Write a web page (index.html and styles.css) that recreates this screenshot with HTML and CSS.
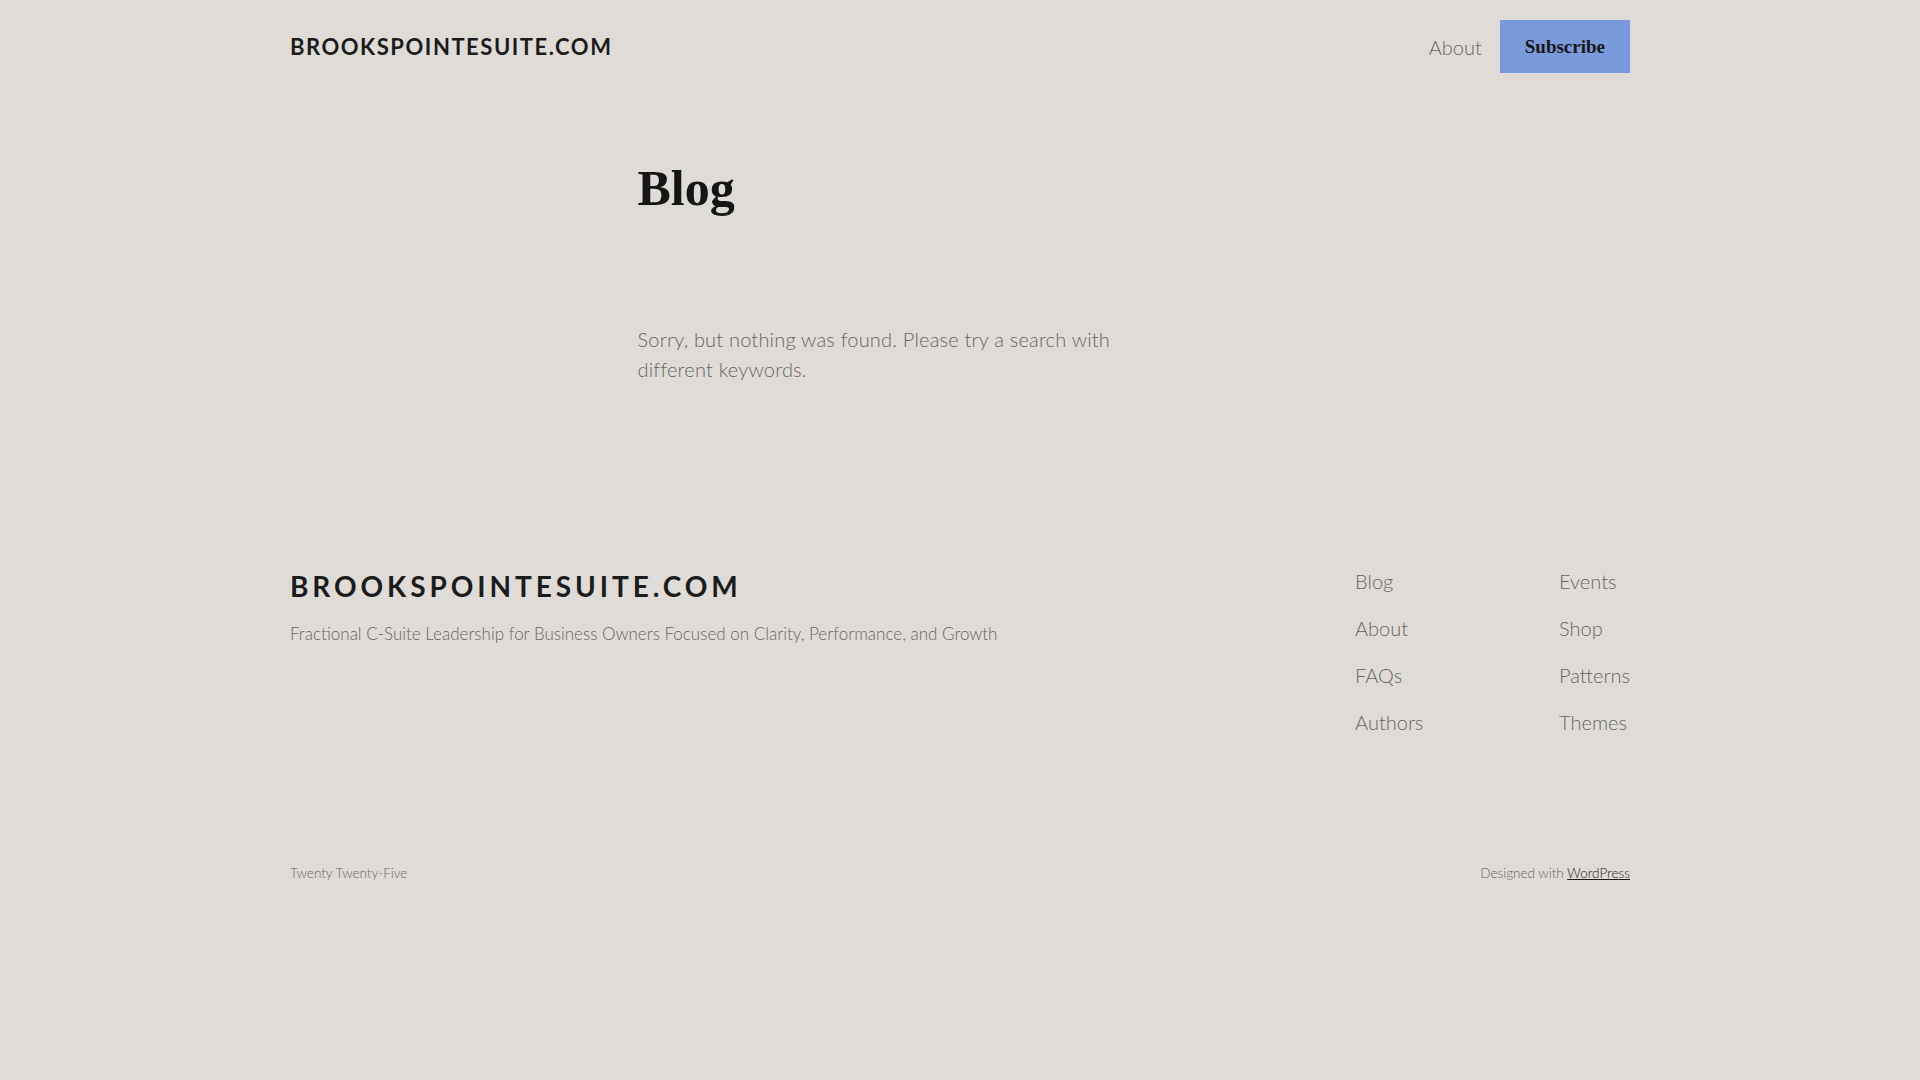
FILE: index.html
```html
<!DOCTYPE html>
<html lang="en">
<head>
    <meta charset="UTF-8">
    <meta name="viewport" content="width=device-width, initial-scale=1.0">
    <title>Blog – brookspointesuite.com</title>
    <link rel="stylesheet" href="styles.css">
</head>
<body>
    <header class="site-header">
        <a class="site-title" href="#">brookspointesuite.com</a>
        <nav class="header-nav">
            <a href="#">About</a>
            <a class="subscribe" href="#">Subscribe</a>
        </nav>
    </header>

    <main class="content">
        <h1>Blog</h1>
        <p class="no-results">Sorry, but nothing was found. Please try a search with different keywords.</p>
    </main>

    <footer class="site-footer">
        <div class="footer-top">
            <div class="footer-brand">
                <a class="footer-title" href="#">brookspointesuite.com</a>
                <p class="tagline">Fractional C-Suite Leadership for Business Owners Focused on Clarity, Performance, and Growth</p>
            </div>
            <nav class="footer-nav">
                <ul>
                    <li><a href="#">Blog</a></li>
                    <li><a href="#">About</a></li>
                    <li><a href="#">FAQs</a></li>
                    <li><a href="#">Authors</a></li>
                </ul>
                <ul>
                    <li><a href="#">Events</a></li>
                    <li><a href="#">Shop</a></li>
                    <li><a href="#">Patterns</a></li>
                    <li><a href="#">Themes</a></li>
                </ul>
            </nav>
        </div>
        <div class="footer-bottom">
            <span>Twenty Twenty-Five</span>
            <span>Designed with <a href="#">WordPress</a></span>
        </div>
    </footer>
</body>
</html>
```

FILE: styles.css
```css
body {
    margin: 0;
    background-color: #dfdcd8;
    color: #676563;
    font-family: Lato, "Open Sans", sans-serif;
    font-weight: 300;
}
a {
    color: inherit;
    text-decoration: none;
}
.site-header,
.site-footer {
    width: 1340px;
    margin: 0 auto;
}
.site-header {
    display: flex;
    justify-content: space-between;
    align-items: center;
    padding: 20px 0;
}
.site-title,
.footer-title {
    color: #1b1b1b;
    font-weight: 700;
    text-transform: uppercase;
}
.site-title {
    font-size: 22px;
    letter-spacing: 0.07em;
}
.header-nav {
    display: flex;
    align-items: center;
    gap: 18px;
    font-size: 20px;
}
.subscribe {
    display: block;
    background-color: #7a9bdb;
    color: #161616;
    font-family: "Liberation Serif", serif;
    font-weight: 700;
    font-size: 19px;
    line-height: 53px;
    padding: 0 25px;
}
.content {
    width: 645px;
    margin: 0 auto;
    padding-top: 67px;
}
h1 {
    margin: 0;
    color: #151515;
    font-family: "Liberation Serif", serif;
    font-size: 50px;
    line-height: 1.15;
}
.no-results {
    margin: 106px 0 0;
    max-width: 500px;
    font-size: 20px;
    letter-spacing: 0.01em;
    line-height: 1.5;
}
.site-footer {
    padding-top: 182px;
}
.footer-top {
    display: flex;
    justify-content: space-between;
}
.footer-title {
    display: block;
    margin-top: 4px;
    font-size: 28px;
    letter-spacing: 0.14em;
    line-height: 1.2;
}
.tagline {
    margin: 18px 0 0;
    font-size: 17px;
    line-height: 1.5;
}
.footer-nav {
    display: grid;
    grid-template-columns: 204px auto;
}
.footer-nav ul {
    list-style: none;
    margin: 0;
    padding: 0;
    display: flex;
    flex-direction: column;
    gap: 17px;
}
.footer-nav li {
    font-size: 20px;
    line-height: 1.5;
    white-space: nowrap;
}
.footer-bottom {
    display: flex;
    justify-content: space-between;
    margin-top: 126px;
    padding-bottom: 100px;
    font-size: 13.5px;
    line-height: 1.5;
}
.footer-bottom a {
    color: #1b1b1b;
    text-decoration: underline;
}
```
